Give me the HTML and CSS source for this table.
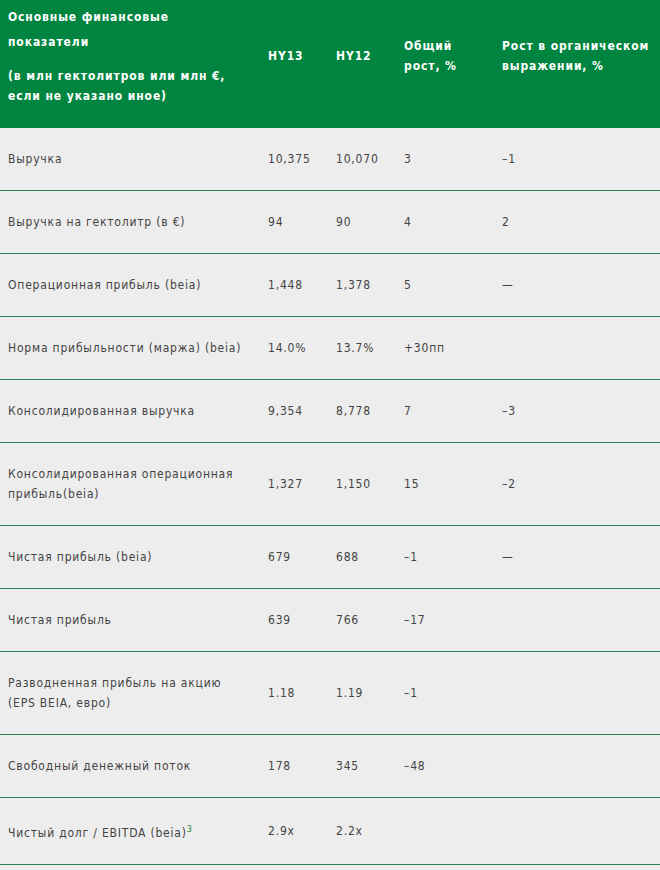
FILE: index.html
```html
<!DOCTYPE html>
<html lang="ru">
<head>
<meta charset="utf-8">
<title>Основные финансовые показатели</title>
<link rel="stylesheet" href="styles.css">
</head>
<body>
<table class="fin">
  <colgroup>
    <col class="c-label">
    <col class="c-num">
    <col class="c-num">
    <col class="c-total">
    <col class="c-org">
  </colgroup>
  <thead>
    <tr>
      <th>
        <div class="title">Основные финансовые<br>показатели</div>
        <div class="sub">(в млн гектолитров или млн €,<br>если не указано иное)</div>
      </th>
      <th>HY13</th>
      <th>HY12</th>
      <th>Общий<br>рост, %</th>
      <th>Рост в органическом<br>выражении, %</th>
    </tr>
  </thead>
  <tbody>
    <tr><td>Выручка</td><td>10,375</td><td>10,070</td><td>3</td><td>–1</td></tr>
    <tr><td>Выручка на гектолитр (в €)</td><td>94</td><td>90</td><td>4</td><td>2</td></tr>
    <tr><td>Операционная прибыль (beia)</td><td>1,448</td><td>1,378</td><td>5</td><td>—</td></tr>
    <tr><td>Норма прибыльности (маржа) (beia)</td><td>14.0%</td><td>13.7%</td><td>+30пп</td><td></td></tr>
    <tr><td>Консолидированная выручка</td><td>9,354</td><td>8,778</td><td>7</td><td>–3</td></tr>
    <tr><td>Консолидированная операционная<br>прибыль(beia)</td><td>1,327</td><td>1,150</td><td>15</td><td>–2</td></tr>
    <tr><td>Чистая прибыль (beia)</td><td>679</td><td>688</td><td>–1</td><td>—</td></tr>
    <tr><td>Чистая прибыль</td><td>639</td><td>766</td><td>–17</td><td></td></tr>
    <tr><td>Разводненная прибыль на акцию<br>(EPS BEIA, евро)</td><td>1.18</td><td>1.19</td><td>–1</td><td></td></tr>
    <tr><td>Свободный денежный поток</td><td>178</td><td>345</td><td>–48</td><td></td></tr>
    <tr><td>Чистый долг / EBITDA (beia)<sup class="note">3</sup></td><td>2.9x</td><td>2.2x</td><td></td><td></td></tr>
  </tbody>
</table>
</body>
</html>
```
FILE: styles.css
```css
html, body {
  margin: 0;
  padding: 0;
  background: #ededed;
}

body {
  font-family: "DejaVu Sans Condensed", "DejaVu Sans", sans-serif;
  font-size: 12px;
  color: #444444;
}

.fin {
  width: 660px;
  border-collapse: collapse;
  table-layout: fixed;
}

.c-label { width: 260px; }
.c-num { width: 68px; }
.c-total { width: 98px; }
.c-org { width: 166px; }

.fin thead th {
  background: #008540;
  color: #ffffff;
  font-weight: bold;
  font-size: 12px;
  text-align: left;
  vertical-align: middle;
  padding: 5px 4px 22px 8px;
  line-height: 20px;
  letter-spacing: 0.9px;
  white-space: nowrap;
}

.title {
  line-height: 25px;
}

.sub {
  margin-top: 11px;
  line-height: 20px;
}

.fin tbody td {
  padding: 21px 6px 21px 8px;
  line-height: 20px;
  vertical-align: middle;
  border-bottom: 1px solid #2a7d4c;
  letter-spacing: 0.8px;
  font-weight: normal;
}

.note {
  color: #1f8a3e;
  font-size: 9px;
  line-height: 20px;
  vertical-align: 5px;
  letter-spacing: 0;
}
```
